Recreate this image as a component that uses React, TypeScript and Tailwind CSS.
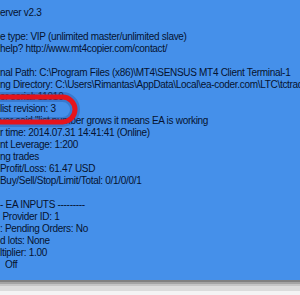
import React from 'react';

const lines: string[] = [
  'erver v2.3',
  '',
  'e type: VIP (unlimited master/unlimited slave)',
  'help? http://www.mt4copier.com/contact/',
  '',
  'nal Path: C:\\Program Files (x86)\\MT4\\SENSUS MT4 Client Terminal-1',
  'ng Directory: C:\\Users\\Rimantas\\AppData\\Local\\ea-coder.com\\LTC\\tctrade',
  'er serial: 11010',
  'list revision: 3',
  'ver said "list number grows it means EA is working',
  'r time: 2014.07.31 14:41:41 (Online)',
  'nt Leverage: 1:200',
  'ng trades',
  'Profit/Loss: 61.47 USD',
  'Buy/Sell/Stop/Limit/Total: 0/1/0/0/1',
  '',
  '- EA INPUTS ---------',
  ' Provider ID: 1',
  ': Pending Orders: No',
  'd lots: None',
  'ltiplier: 1.00',
  '  Off',
];

const App: React.FC = () => {
  return (
    <div className="w-[300px] h-[295px] overflow-hidden flex flex-col bg-[#f2f2f2]">
      <div className="relative h-[280px] bg-[#4590ea] overflow-hidden">
        <div className="pt-[7px] font-['Liberation_Sans',sans-serif] text-[10px] leading-[12px] tracking-[-0.3px] text-[#061330] whitespace-pre">
          {lines.map((l, i) => (
            <div key={i} className="h-[12px]">{l}</div>
          ))}
        </div>
        {/* red marker ring */}
        <svg className="absolute left-0 top-0" width="300" height="280">
          <rect x="-70" y="97" width="145" height="25" rx="12.5" fill="none" stroke="#1f4f9a" strokeOpacity="0.35" strokeWidth="10" />
          <rect x="-70" y="97" width="145" height="25" rx="12.5" fill="none" stroke="#e5141c" strokeWidth="5" />
        </svg>
      </div>
      <div className="h-[2px] bg-[#808080]" />
      <div className="h-[2px] bg-[#a3a3a3]" />
      <div className="h-[2px] bg-[#c4c4c4]" />
      <div className="h-[5px] bg-[#dcdcdc]" />
      <div className="flex-1 bg-[#f4f4f4]" />
    </div>
  );
};

export default App;
